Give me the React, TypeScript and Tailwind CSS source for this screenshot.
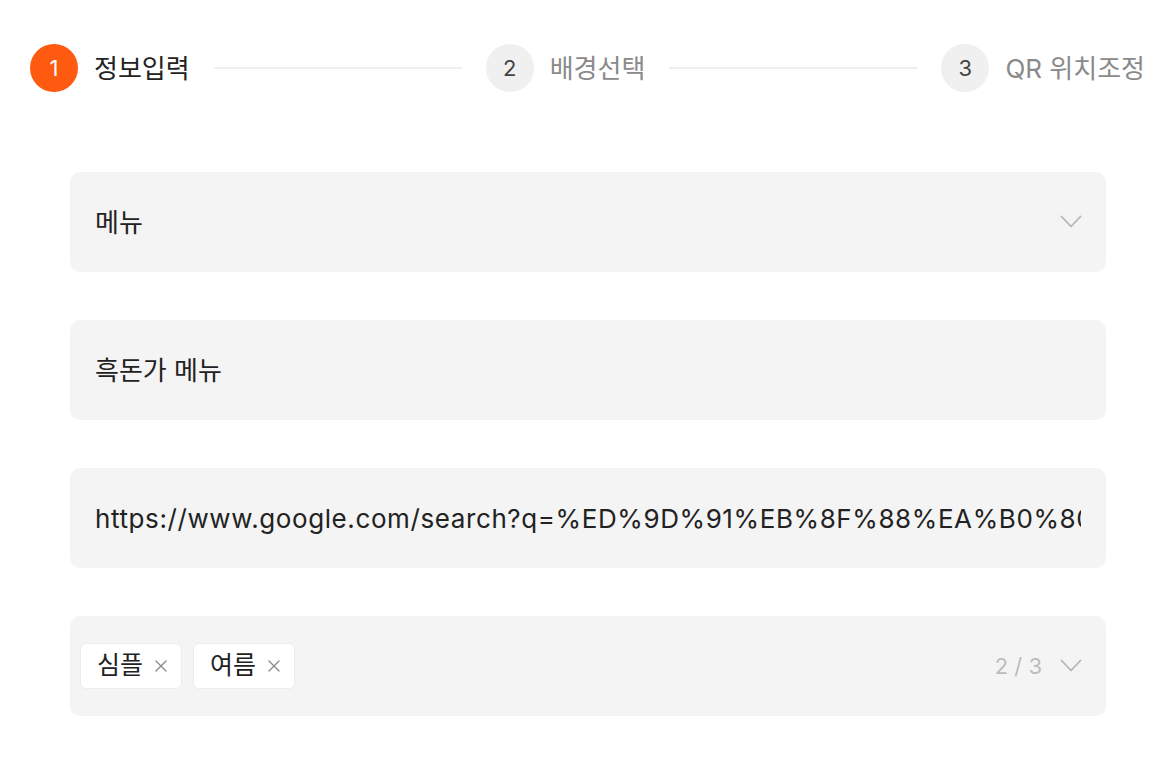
import { X } from "lucide-react";

const FONT = { fontFamily: 'Inter, "Noto Sans CJK KR", sans-serif' };

const steps = [
  { no: 1, title: "정보입력", active: true },
  { no: 2, title: "배경선택", active: false },
  { no: 3, title: "QR 위치조정", active: false },
];

const Chevron = () => (
  <svg width="22" height="14" viewBox="0 0 22 14" fill="none" className="shrink-0">
    <path d="M1.5 1.5 L11 11.5 L20.5 1.5" stroke="#b5b5b5" strokeWidth="1.8" strokeLinecap="round" strokeLinejoin="round" />
  </svg>
);

const Tag = ({ label }: { label: string }) => (
  <div className="flex h-[46px] items-center gap-[8px] rounded-md border border-[#ececec] bg-white pl-[16px] pr-[10px]">
    <span className="text-[25px] text-[#222]">{label}</span>
    <X size={20} strokeWidth={1.6} className="text-[#8c8c8c]" />
  </div>
);

const App = () => {
  return (
    <div className="min-h-[764px] w-full bg-white" style={FONT}>
      <div className="flex items-center pl-[30px] pr-[29px] pt-[44px]">
        {steps.map((s, i) => (
          <div
            key={s.no}
            className={i < steps.length - 1 ? "flex flex-1 items-center" : "flex items-center"}
          >
            <div
              className={
                s.active
                  ? "flex h-[48px] w-[48px] shrink-0 items-center justify-center rounded-full bg-[#fe5a10] text-[22px] text-white"
                  : "flex h-[48px] w-[48px] shrink-0 items-center justify-center rounded-full bg-[#f0f0f0] text-[22px] text-[#444]"
              }
            >
              {s.no}
            </div>
            <span
              className={
                s.active
                  ? "ml-[16px] whitespace-nowrap text-[26px] text-[#222]"
                  : "ml-[16px] whitespace-nowrap text-[26px] text-[#8a8a8a]"
              }
            >
              {s.title}
            </span>
            {i < steps.length - 1 && <div className="mx-[24px] h-[2px] flex-1 bg-[#efefef]" />}
          </div>
        ))}
      </div>

      <div className="flex flex-col gap-[48px] pl-[70px] pr-[68px] pt-[80px]">
        <div className="flex h-[100px] items-center justify-between rounded-[10px] bg-[#f4f4f4] pl-[25px] pr-[24px]">
          <span className="text-[26px] text-[#222]">메뉴</span>
          <Chevron />
        </div>

        <div className="flex h-[100px] items-center rounded-[10px] bg-[#f4f4f4] px-[25px]">
          <span className="text-[26px] text-[#222]">흑돈가 메뉴</span>
        </div>

        <div className="flex h-[100px] items-center rounded-[10px] bg-[#f4f4f4] px-[25px]">
          <span className="block overflow-hidden whitespace-nowrap text-[26px] tracking-[0.6px] text-[#222]">
            https://www.google.com/search?q=%ED%9D%91%EB%8F%88%EA%B0%80+%EB%A9%94%EB%89%B4
          </span>
        </div>

        <div className="flex h-[100px] items-center justify-between rounded-[10px] bg-[#f4f4f4] pl-[10px] pr-[24px]">
          <div className="flex items-center gap-[11px]">
            <Tag label="심플" />
            <Tag label="여름" />
          </div>
          <div className="flex items-center gap-[18px]">
            <span className="text-[22px] text-[#bdbdbd]">2 / 3</span>
            <Chevron />
          </div>
        </div>
      </div>
    </div>
  );
};

export default App;
